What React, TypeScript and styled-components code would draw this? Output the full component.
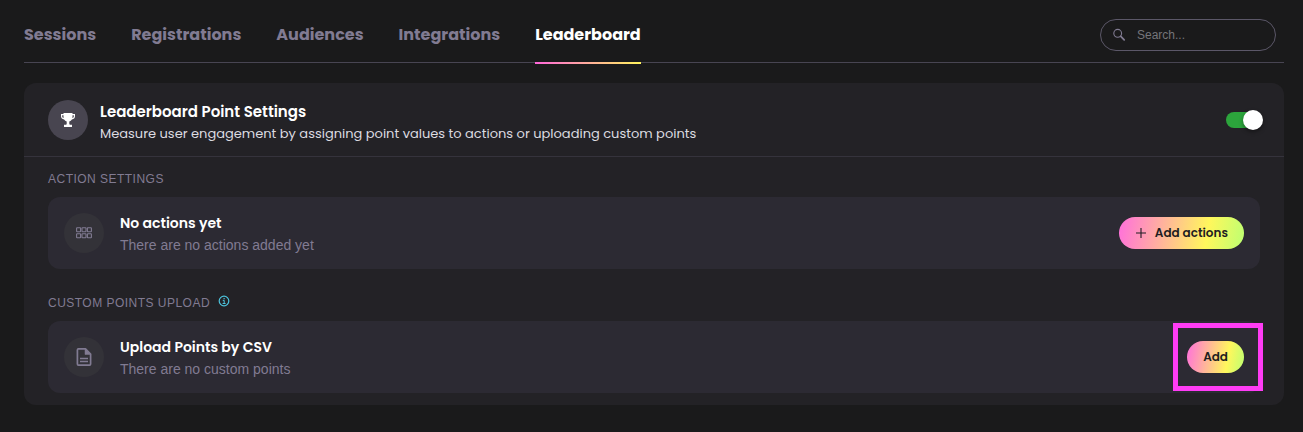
import React, { useState } from "react";
import styled, { createGlobalStyle } from "styled-components";

const display = `Poppins, Inter, sans-serif`;
const plain = `"Liberation Sans", Arial, sans-serif`;

const GlobalStyle = createGlobalStyle`
  *, *::before, *::after { box-sizing: border-box; }
  body { margin: 0; background: #1a1a1b; color: #fff; font-family: ${plain}; }
  h2, h3, h4, p { margin: 0; }
`;

const Page = styled.main`
  padding: 0 19px 27px 24px;
`;

const TopBar = styled.header`
  display: flex;
  align-items: stretch;
  justify-content: space-between;
  height: 63px;
  padding-right: 8px;
  border-bottom: 1px solid #484552;
`;

const Tabs = styled.nav`
  display: flex;
  gap: 35px;
`;

const Tab = styled.a<{ $active?: boolean }>`
  position: relative;
  padding-top: 23px;
  font: 700 16px/24px ${display};
  color: ${(p) => (p.$active ? "#fff" : "#817b92")};
  text-decoration: none;

  &::after {
    content: "";
    display: ${(p) => (p.$active ? "block" : "none")};
    position: absolute;
    inset: auto 0 -2px;
    height: 2px;
    background: linear-gradient(90deg, #ff66da, #fff35c);
  }
`;

const SearchBox = styled.label`
  display: flex;
  align-items: center;
  gap: 10px;
  width: 176px;
  height: 32px;
  margin-top: 19px;
  padding: 0 12px;
  border: 1px solid #5b5768;
  border-radius: 16px;
  color: #817b92;

  svg { flex: none; }
`;

const SearchInput = styled.input`
  flex: 1;
  min-width: 0;
  padding: 0;
  border: 0;
  outline: 0;
  background: none;
  font: 12px/16px ${plain};
  color: #fff;

  &::placeholder { color: #75757a; opacity: 1; }
`;

const Panel = styled.section`
  margin-top: 20px;
  border-radius: 12px;
  background: #232226;
`;

const PanelHead = styled.div`
  display: flex;
  align-items: center;
  gap: 12px;
  padding: 13px 21px 12px 24px;
  border-bottom: 1px solid #35333c;
`;

const IconDisc = styled.span<{ $strong?: boolean }>`
  display: grid;
  place-items: center;
  flex: none;
  width: 40px;
  height: 40px;
  border-radius: 50%;
  background: ${(p) => (p.$strong ? "#484550" : "#333238")};
  color: ${(p) => (p.$strong ? "#fff" : "#817b92")};
`;

const Words = styled.div`
  flex: 1;
  min-width: 0;
  padding-top: 4px;
`;

const PanelTitle = styled.h2`
  font: 600 15px/24px ${display};
`;

const PanelText = styled.p`
  font: 400 13px/20px ${display};
  color: #dcdbe0;
`;

const Switch = styled.input`
  appearance: none;
  position: relative;
  flex: none;
  width: 37px;
  height: 20px;
  margin: 0;
  cursor: pointer;

  &::before {
    content: "";
    position: absolute;
    inset: 2px 3px 2px 0;
    border-radius: 8px;
    background: #57545f;
  }
  &::after {
    content: "";
    position: absolute;
    top: 0;
    left: 0;
    width: 20px;
    height: 20px;
    border-radius: 50%;
    background: #fff;
    box-shadow: 0 2px 4px rgba(0, 0, 0, 0.4);
  }
  &:checked::before { background: #2ca53c; }
  &:checked::after { left: 17px; }
`;

const Group = styled.section`
  padding: 12px 24px;
`;

const GroupLabel = styled.h3`
  display: flex;
  align-items: flex-start;
  gap: 8px;
  margin-bottom: 8px;
  font: 400 12px/20px ${plain};
  letter-spacing: 0.04em;
  color: #817b92;
`;

const InfoButton = styled.button`
  display: flex;
  padding: 2px 0;
  border: 0;
  background: none;
  color: #4cc3dc;
`;

const Card = styled.div`
  display: flex;
  align-items: center;
  gap: 16px;
  padding: 12px 16px;
  border-radius: 12px;
  background: #2c2a33;
`;

const CardTitle = styled.h4`
  font: 600 14px/20px ${display};
`;

const CardText = styled.p`
  font: 14px/24px ${plain};
  color: #817b92;
`;

const GradientButton = styled.button`
  display: flex;
  align-items: center;
  gap: 8px;
  height: 32px;
  padding: 0 16px;
  border: 0;
  border-radius: 16px;
  background: linear-gradient(100deg, #ff6fdc 0%, #fff75c 70%, #bcff72 100%);
  font: 600 12px/18px ${display};
  color: #1f1d22;
  cursor: pointer;
`;

const Highlight = styled.div`
  position: relative;

  &::after {
    content: "";
    position: absolute;
    inset: -18px -19px -18px -14px;
    border: 5px solid #ff3cf5;
    pointer-events: none;
  }
`;

const SearchIcon = () => (
  <svg width="14" height="14" viewBox="0 0 14 14" fill="none" stroke="currentColor" aria-hidden="true">
    <circle cx="4.7" cy="5.3" r="3.9" strokeWidth="1.1" />
    <path d="M7.8 8.4 L11.2 11.8" strokeWidth="1.8" strokeLinecap="round" />
  </svg>
);

const TrophyIcon = () => (
  <svg width="16" height="16" viewBox="0 0 16 16" aria-hidden="true">
    <path
      fill="currentColor"
      fillRule="evenodd"
      d="M3.5 1h9v1H15v2.2c0 1.8-1.3 3-3.1 3.2-.6 1.1-1.5 1.8-2.6 2.1v2.2c0 .6.6 1 1.2 1H12V15H4v-2.3h1.5c.7 0 1.2-.4 1.2-1V9.5c-1.1-.3-2-1-2.6-2.1C2.3 7.2 1 6 1 4.2V2h2.5zM2.2 3.2v1c0 .9.6 1.6 1.5 1.9-.1-.5-.2-1-.2-1.5V3.2zM12.5 3.2v1.4c0 .5-.1 1-.2 1.5.9-.3 1.5-1 1.5-1.9v-1z"
    />
  </svg>
);

const GridIcon = () => (
  <svg width="16" height="12" viewBox="0 0 16 12" fill="none" stroke="currentColor" strokeWidth="1.1" aria-hidden="true">
    {[0.8, 6.8].map((y) =>
      [0.6, 6, 11.4].map((x) => <rect key={`${x}-${y}`} x={x} y={y} width="4" height="4" rx=".5" />)
    )}
  </svg>
);

const FileIcon = () => (
  <svg width="16" height="20" viewBox="0 0 16 20" fill="none" stroke="currentColor" aria-hidden="true">
    <path d="M9.5 1.9H2.4Q1.4 1.9 1.4 3v14q0 1.1 1 1.1h11.2q1 0 1-1.1V7z" strokeWidth="1.7" strokeLinejoin="round" />
    <path d="M9 1.5v6h5.7z" fill="currentColor" strokeWidth=".5" />
    <path d="M4 11.5h8M4 14.5h8" strokeWidth="1.5" />
  </svg>
);

const InfoIcon = () => (
  <svg width="12" height="12" viewBox="0 0 12 12" fill="none" stroke="currentColor" aria-hidden="true">
    <circle cx="6" cy="6" r="4.8" strokeWidth="1.2" />
    <path d="M4.8 5.4h1.4v3M4.6 8.5h3" />
    <path d="M5.5 3.6h1.2" strokeWidth="1.2" />
  </svg>
);

const PlusIcon = () => (
  <svg width="12" height="12" viewBox="0 0 12 12" fill="none" stroke="currentColor" aria-hidden="true">
    <path d="M6 1v10M1 6h10" strokeWidth="1.1" />
  </svg>
);

const tabs = ["Sessions", "Registrations", "Audiences", "Integrations", "Leaderboard"];

export default function App() {
  const [enabled, setEnabled] = useState(true);
  return (
    <>
      <GlobalStyle />
      <Page>
        <TopBar>
          <Tabs aria-label="Event sections">
            {tabs.map((name) => (
              <Tab
                key={name}
                href={`#${name.toLowerCase()}`}
                $active={name === "Leaderboard"}
                aria-current={name === "Leaderboard" ? "page" : undefined}
              >
                {name}
              </Tab>
            ))}
          </Tabs>
          <SearchBox>
            <SearchIcon />
            <SearchInput type="text" placeholder="Search..." aria-label="Search" />
          </SearchBox>
        </TopBar>

        <Panel>
          <PanelHead>
            <IconDisc $strong>
              <TrophyIcon />
            </IconDisc>
            <Words>
              <PanelTitle id="points-title">Leaderboard Point Settings</PanelTitle>
              <PanelText>
                Measure user engagement by assigning point values to actions or uploading custom points
              </PanelText>
            </Words>
            <Switch
              type="checkbox"
              role="switch"
              aria-labelledby="points-title"
              checked={enabled}
              onChange={(e) => setEnabled(e.target.checked)}
            />
          </PanelHead>

          <Group>
            <GroupLabel>ACTION SETTINGS</GroupLabel>
            <Card>
              <IconDisc>
                <GridIcon />
              </IconDisc>
              <Words>
                <CardTitle>No actions yet</CardTitle>
                <CardText>There are no actions added yet</CardText>
              </Words>
              <GradientButton type="button">
                <PlusIcon />
                Add actions
              </GradientButton>
            </Card>
          </Group>

          <Group>
            <GroupLabel>
              CUSTOM POINTS UPLOAD
              <InfoButton type="button" aria-label="About custom points">
                <InfoIcon />
              </InfoButton>
            </GroupLabel>
            <Card>
              <IconDisc>
                <FileIcon />
              </IconDisc>
              <Words>
                <CardTitle>Upload Points by CSV</CardTitle>
                <CardText>There are no custom points</CardText>
              </Words>
              <Highlight>
                <GradientButton type="button">Add</GradientButton>
              </Highlight>
            </Card>
          </Group>
        </Panel>
      </Page>
    </>
  );
}
